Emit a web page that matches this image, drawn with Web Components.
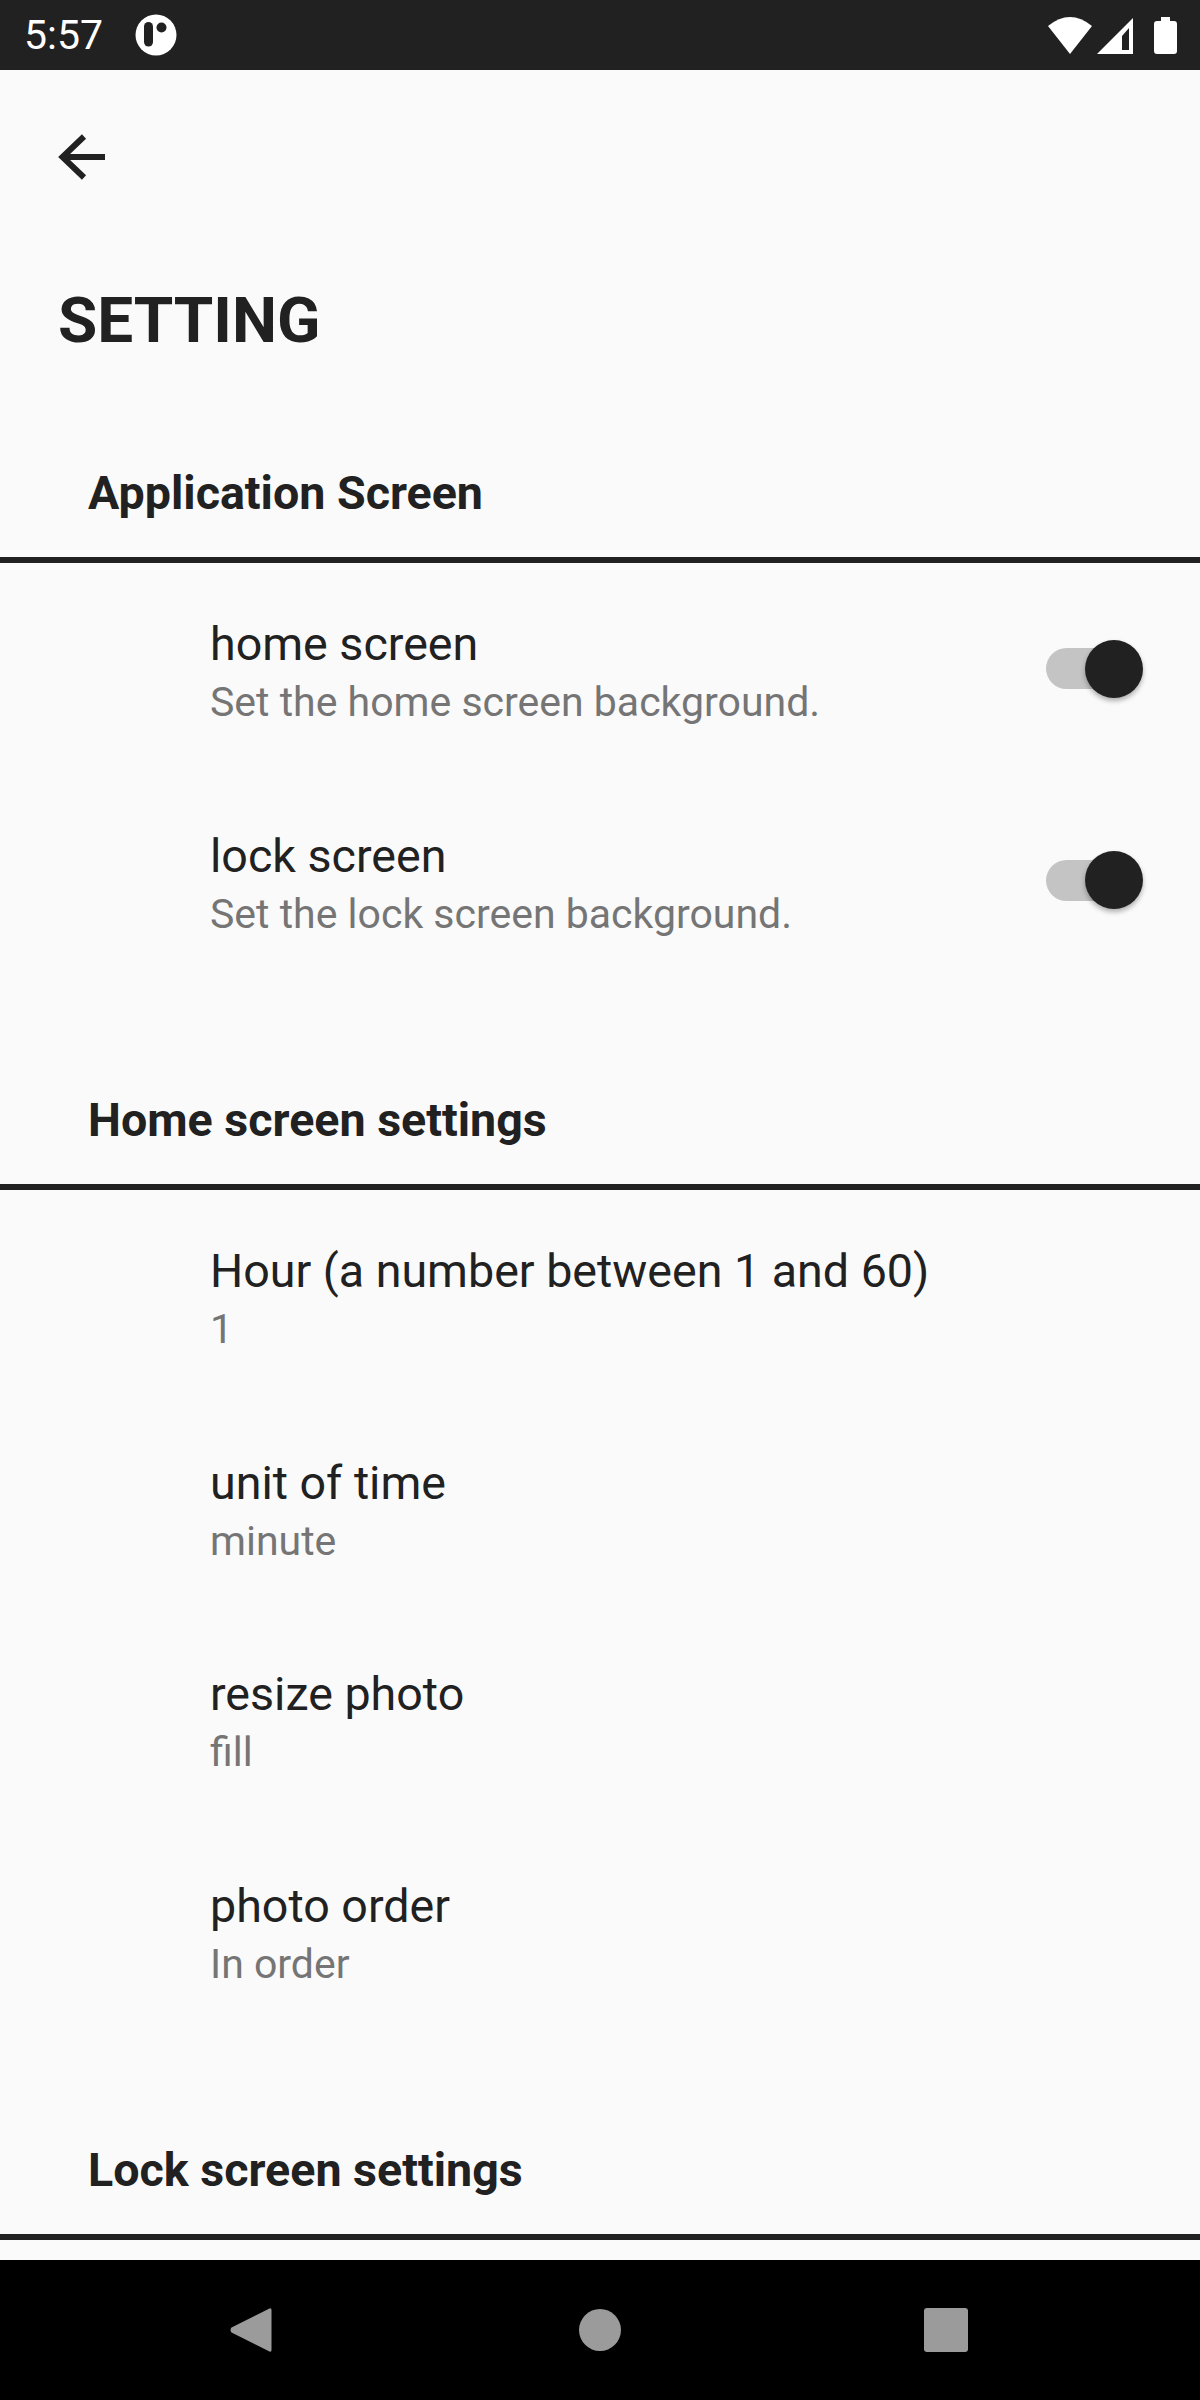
<!DOCTYPE html>
<html>
<head>
<meta charset="utf-8" />
<style>
  html, body { margin: 0; height: 100%; }
  body {
    width: 1200px;
    height: 2400px;
    overflow: hidden;
    display: flex;
    flex-direction: column;
    background: #fafafa;
    color: #212121;
    font-family: Roboto, "Liberation Sans", sans-serif;
  }
</style>
</head>
<body>
  <status-bar time="5:57"></status-bar>
  <settings-page>
    <pref-category label="Application Screen">
      <pref-item title="home screen" summary="Set the home screen background." toggle></pref-item>
      <pref-item title="lock screen" summary="Set the lock screen background." toggle></pref-item>
    </pref-category>
    <pref-category label="Home screen settings">
      <pref-item title="Hour (a number between 1 and 60)" summary="1"></pref-item>
      <pref-item title="unit of time" summary="minute"></pref-item>
      <pref-item title="resize photo" summary="fill"></pref-item>
      <pref-item title="photo order" summary="In order"></pref-item>
    </pref-category>
    <pref-category label="Lock screen settings"></pref-category>
  </settings-page>
  <nav-bar></nav-bar>

<script>
class StatusBar extends HTMLElement {
  constructor() {
    super();
    this.attachShadow({ mode: "open" });
    this.shadowRoot.innerHTML = `
    <style>
      :host { display: flex; align-items: center; height: 70px; flex: none; background: #212121; color: #fff; padding: 0 23px 0 24px; box-sizing: border-box; }
      .time { font-size: 41px; line-height: 70px; }
      .logo { margin-left: 32px; display: block; }
      .right { margin-left: auto; display: flex; align-items: center; }
      svg { display: block; }
    </style>
    <span class="time">${this.getAttribute("time")}</span>
    <svg class="logo" width="42" height="42" viewBox="0 0 42 42">
      <circle cx="21" cy="21" r="20.500" fill="#fff"/>
      <rect x="9" y="8" width="9" height="24.500" rx="4.500" fill="#212121"/>
      <circle cx="26.500" cy="13.500" r="5" fill="#212121"/>
    </svg>
    <div class="right">
      <svg width="44" height="37" viewBox="0 0 44 37"><path d="M22 37 L0 9 Q22 -9 44 9 Z" fill="#fff"/></svg>
      <svg style="margin-left:5px" width="36" height="37" viewBox="0 0 36 37"><path fill-rule="evenodd" d="M0 37 L36 1 V37 Z M25 19 L32 11 V33 H25 Z" fill="#fff"/></svg>
      <svg style="margin-left:21px" width="23" height="37" viewBox="0 0 23 37"><path d="M7 0 H16 V4 H20 Q23 4 23 7 V34 Q23 37 20 37 H3 Q0 37 0 34 V7 Q0 4 3 4 H7 Z" fill="#fff"/></svg>
    </div>`;
  }
}

class SettingsPage extends HTMLElement {
  constructor() {
    super();
    this.attachShadow({ mode: "open" });
    this.shadowRoot.innerHTML = `
    <style>
      :host { display: block; flex: 1; min-height: 0; overflow: hidden; }
      .toolbar { height: 174px; display: flex; align-items: center; padding-left: 58px; box-sizing: border-box; }
      .toolbar svg { display: block; }
      h1 { margin: 0; padding: 40px 0 0 58px; font-size: 63.800px; line-height: 74px; font-weight: 700; height: 181px; color: #212121; }
    </style>
    <div class="toolbar">
      <svg width="48" height="48" viewBox="0 0 48 48"><path d="M47 24 H5 M26 3.500 L4.500 24 L26 44.500" fill="none" stroke="#212121" stroke-width="6"/></svg>
    </div>
    <h1>SETTING</h1>
    <slot></slot>`;
  }
}

class PrefCategory extends HTMLElement {
  constructor() {
    super();
    this.attachShadow({ mode: "open" });
    this.shadowRoot.innerHTML = `
    <style>
      :host { display: block; margin-bottom: 106px; }
      .label { padding-left: 88px; font-size: 46.600px; line-height: 56px; font-weight: 700; padding-bottom: 36px; color: #212121; }
      .line { height: 6px; background: #212121; }
    </style>
    <div class="label">${this.getAttribute("label")}</div>
    <div class="line"></div>
    <slot></slot>`;
  }
}

class PrefItem extends HTMLElement {
  constructor() {
    super();
    this.attachShadow({ mode: "open" });
    const toggle = this.hasAttribute("toggle") ? "<pref-toggle></pref-toggle>" : "";
    this.shadowRoot.innerHTML = `
    <style>
      :host { display: flex; align-items: center; height: 211.500px; padding: 0 57px 0 210px; box-sizing: border-box; }
      .text { flex: 1; padding-top: 9px; }
      .title { font-size: 46.600px; line-height: 58px; color: #212121; }
      .summary { font-size: 41px; line-height: 58px; color: #757575; }
    </style>
    <div class="text">
      <div class="title">${this.getAttribute("title")}</div>
      <div class="summary">${this.getAttribute("summary")}</div>
    </div>
    ${toggle}`;
  }
}

class PrefToggle extends HTMLElement {
  constructor() {
    super();
    this.attachShadow({ mode: "open" });
    this.shadowRoot.innerHTML = `
    <style>
      :host { display: flex; align-items: center; position: relative; width: 97px; height: 60px; flex: none; }
      .track { width: 88px; height: 41px; border-radius: 21px; background: #c4c4c4; }
      .thumb { position: absolute; right: 0; top: 1px; width: 58px; height: 58px; border-radius: 50%; background: #212121; box-shadow: 0 3px 5px rgba(0,0,0,.3); }
    </style>
    <div class="track"></div>
    <div class="thumb"></div>`;
  }
}

class NavBar extends HTMLElement {
  constructor() {
    super();
    this.attachShadow({ mode: "open" });
    this.shadowRoot.innerHTML = `
    <style>
      :host { display: block; height: 140px; flex: none; background: #000; position: relative; }
      svg { position: absolute; top: 47px; display: block; }
    </style>
    <svg style="left:229px" width="44" height="46" viewBox="0 0 44 46"><path d="M40.500 1.500 Q42.500 0.800 42.500 3 V43 Q42.500 45.200 40.500 44.500 L2.500 25.500 Q0.500 23 2.500 20.500 Z" fill="#9b9b9b"/></svg>
    <svg style="left:579px" width="42" height="46" viewBox="0 0 42 46"><circle cx="21" cy="23" r="21" fill="#9b9b9b"/></svg>
    <svg style="left:924px" width="44" height="46" viewBox="0 0 44 46"><rect x="0" y="1" width="44" height="44" rx="3" fill="#9b9b9b"/></svg>`;
  }
}

customElements.define("status-bar", StatusBar);
customElements.define("settings-page", SettingsPage);
customElements.define("pref-category", PrefCategory);
customElements.define("pref-toggle", PrefToggle);
customElements.define("pref-item", PrefItem);
customElements.define("nav-bar", NavBar);
</script>
</body>
</html>
